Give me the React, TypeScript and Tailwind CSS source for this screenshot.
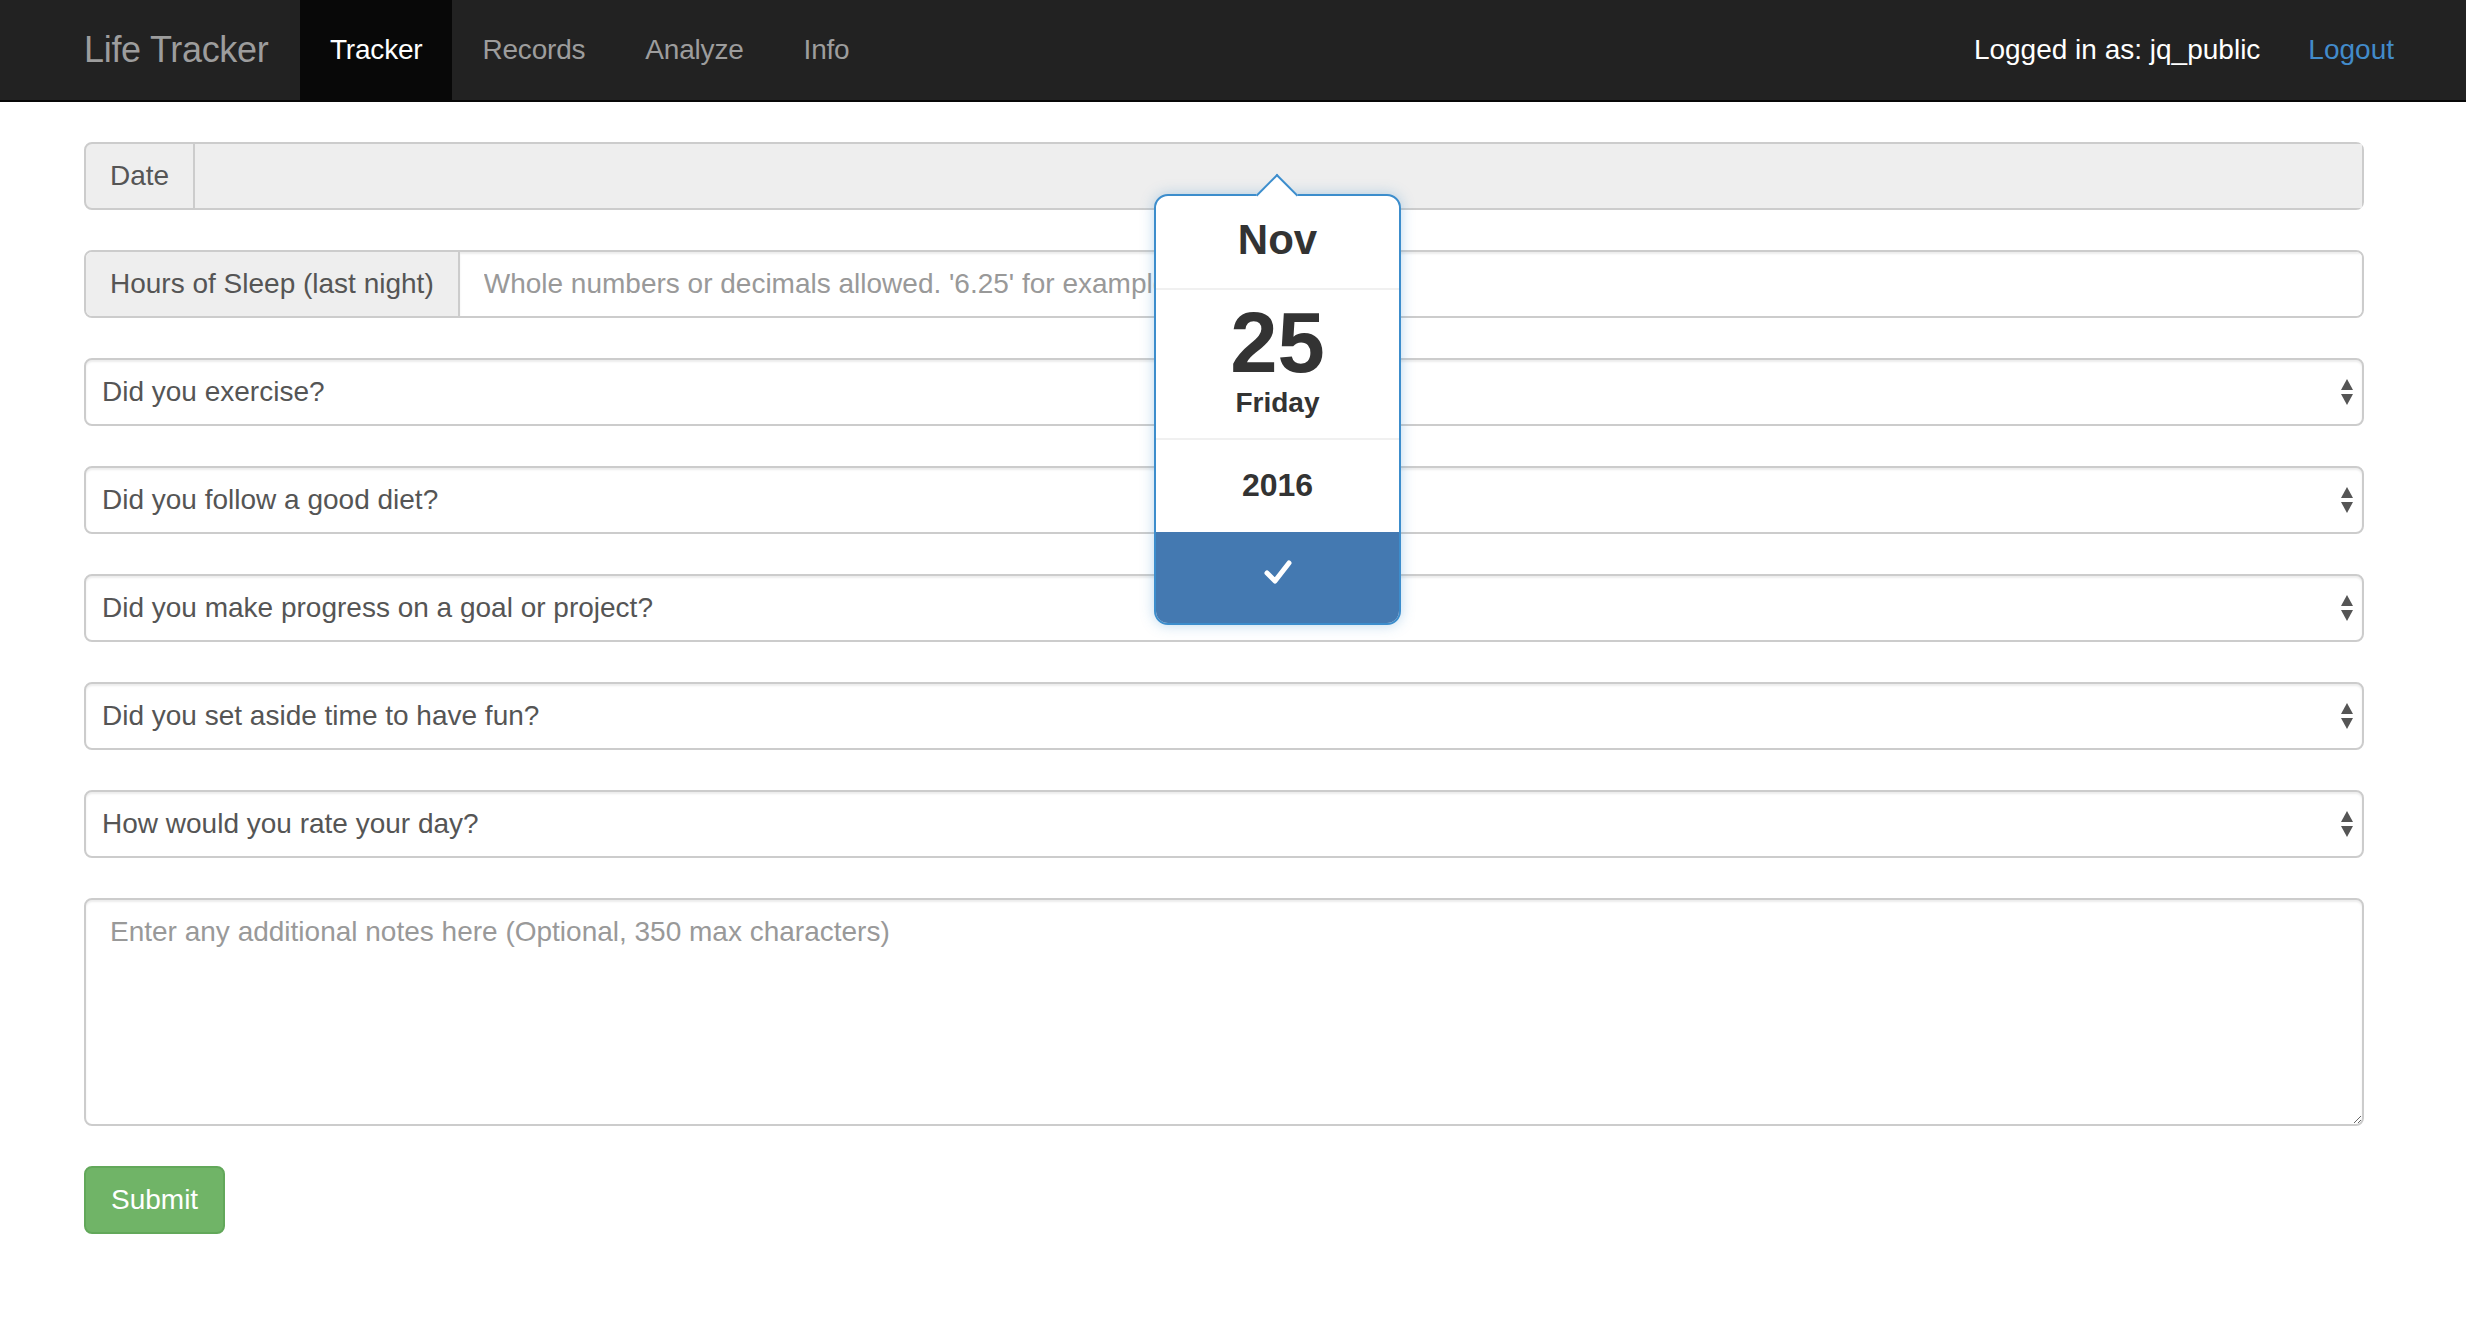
import React from 'react';

const QUESTIONS = [
  'Did you exercise?',
  'Did you follow a good diet?',
  'Did you make progress on a goal or project?',
  'Did you set aside time to have fun?',
  'How would you rate your day?',
];

function SelectArrows() {
  return (
    <svg width="12" height="26" viewBox="0 0 12 26" className="flex-shrink-0">
      <polygon points="0,11 6,0 12,11" fill="#555" />
      <polygon points="0,15 12,15 6,26" fill="#555" />
    </svg>
  );
}

function FakeSelect({ label }: { label: string }) {
  return (
    <div className="h-[68px] flex items-center justify-between pl-[16px] pr-[9px] bg-white border-2 border-[#ccc] rounded-[8px] shadow-[inset_0_2px_2px_rgba(0,0,0,0.075)] text-[#555]">
      <span>{label}</span>
      <SelectArrows />
    </div>
  );
}

/* ─── Date picker popover ─── */
function DatePopover() {
  return (
    <div className="absolute top-[52px] left-[1070px] w-[247px] bg-white border-2 border-[#3c8dcc] rounded-[14px] shadow-[0_0_14px_rgba(60,141,204,0.35)] text-[#333] font-bold">
      {/* arrow */}
      <div className="absolute -top-[16px] left-[106px] w-[30px] h-[30px] rotate-45 bg-white border-t-2 border-l-2 border-[#3c8dcc]" />

      <div className="relative h-[92px] flex items-center justify-center pb-[4px] text-[42px] leading-none">Nov</div>
      <div className="h-[2px] bg-[#f0f0f0]" />
      <div className="h-[148px] flex flex-col items-center pt-[10px]">
        <span className="text-[85px] leading-none">25</span>
        <span className="text-[28px] leading-[32px] mt-[2px]">Friday</span>
      </div>
      <div className="h-[2px] bg-[#f0f0f0]" />
      <div className="h-[92px] flex items-center justify-center pb-[3px] text-[32px] leading-none">2016</div>
      <button className="w-full h-[91px] flex items-center justify-center pb-[12px] bg-[#4479b1] rounded-b-[12px]" aria-label="Confirm">
        <svg width="30" height="28" viewBox="0 0 30 28">
          <path d="M4 15 L12 23 L26 5" fill="none" stroke="white" strokeWidth="5" strokeLinecap="round" strokeLinejoin="round" />
        </svg>
      </button>
    </div>
  );
}

export default function App() {
  return (
    <div className="min-h-screen bg-white font-['Liberation_Sans',Arial,sans-serif] text-[28px] leading-[40px] text-[#333]">

      {/* Navbar */}
      <nav className="h-[102px] bg-[#222] border-b-2 border-[#080808] flex items-stretch pl-[54px] pr-[72px]">
        <a className="w-[246px] px-[30px] flex items-center text-[36px] tracking-[-0.3px] text-[#9d9d9d]">Life Tracker</a>
        <ul className="flex items-stretch tracking-[-0.2px]">
          <li className="px-[30px] flex items-center bg-[#080808] text-white">Tracker</li>
          <li className="px-[30px] flex items-center text-[#9d9d9d]">Records</li>
          <li className="px-[30px] flex items-center text-[#9d9d9d]">Analyze</li>
          <li className="px-[30px] flex items-center text-[#9d9d9d]">Info</li>
        </ul>
        <div className="ml-auto flex items-center gap-[48px]">
          <span className="text-white">Logged in as: jq_public</span>
          <a className="text-[#428bca]">Logout</a>
        </div>
      </nav>

      {/* Form */}
      <main className="relative ml-[84px] w-[2280px] mt-[40px] flex flex-col gap-[40px]">

        {/* Date */}
        <div className="h-[68px] flex border-2 border-[#ccc] rounded-[8px] bg-[#eee] text-[#555]">
          <span className="px-[24px] flex items-center border-r-2 border-[#ccc]">Date</span>
          <input readOnly className="flex-1 bg-[#eee] outline-none px-[24px]" />
        </div>

        {/* Sleep */}
        <div className="h-[68px] flex border-2 border-[#ccc] rounded-[8px] overflow-hidden text-[#555]">
          <span className="px-[24px] flex items-center bg-[#eee] border-r-2 border-[#ccc]">Hours of Sleep (last night)</span>
          <input
            className="flex-1 bg-white outline-none px-[24px] shadow-[inset_0_2px_2px_rgba(0,0,0,0.075)] placeholder-[#999]"
            placeholder="Whole numbers or decimals allowed. '6.25' for example"
          />
        </div>

        {QUESTIONS.map(q => <FakeSelect key={q} label={q} />)}

        <textarea
          className="h-[228px] px-[24px] py-[12px] border-2 border-[#ccc] rounded-[8px] outline-none resize-y shadow-[inset_0_2px_2px_rgba(0,0,0,0.075)] placeholder-[#999] text-[#555]"
          placeholder="Enter any additional notes here (Optional, 350 max characters)"
        />

        <div>
          <button className="h-[68px] px-[25px] bg-[#70b467] border-2 border-[#62a85a] rounded-[8px] text-white">
            Submit
          </button>
        </div>

        <DatePopover />
      </main>
    </div>
  );
}
